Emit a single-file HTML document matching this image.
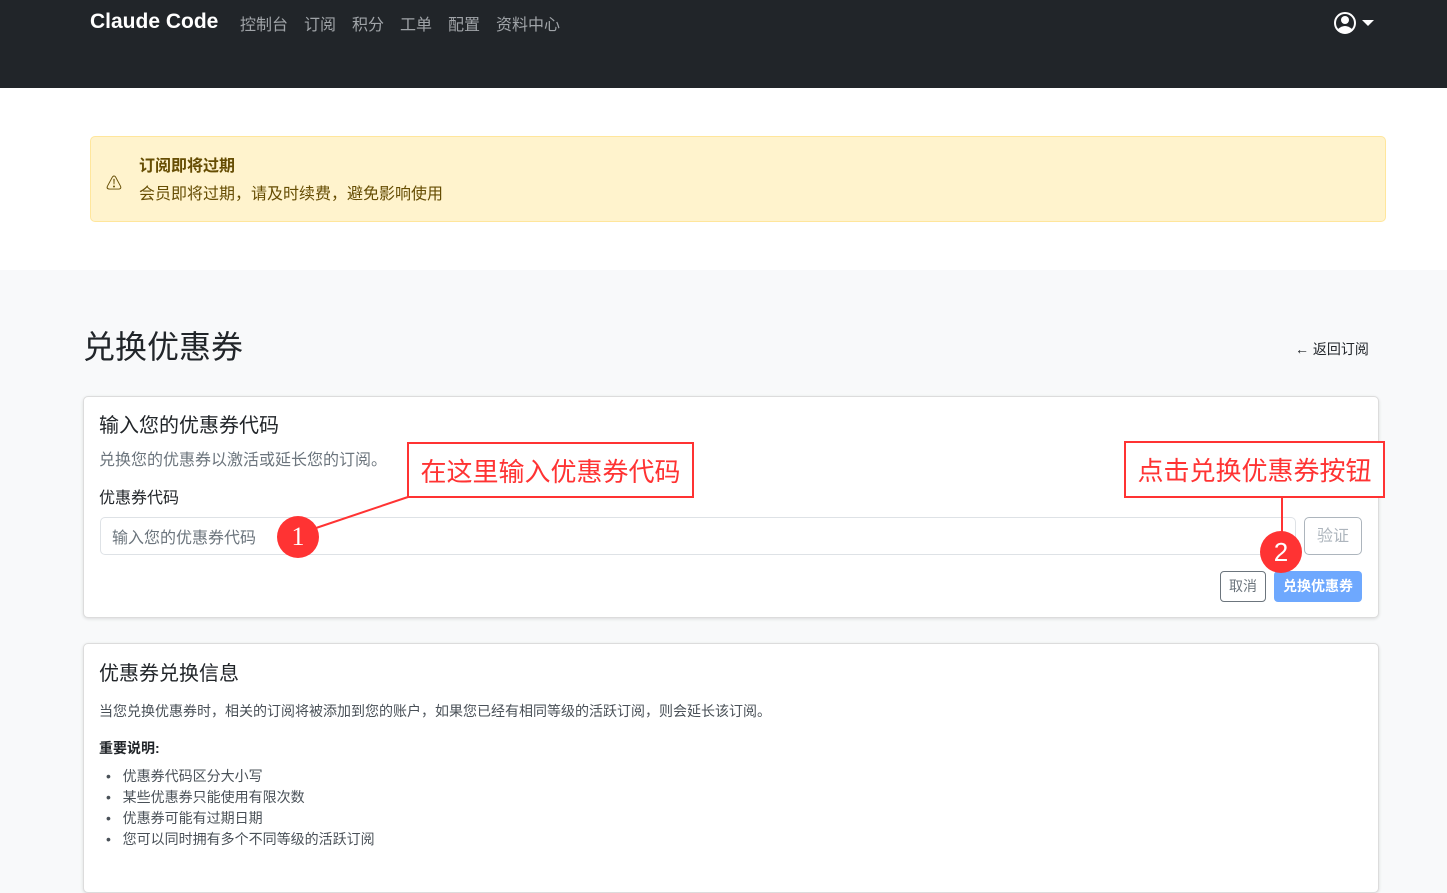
<!DOCTYPE html>
<html><head><meta charset="utf-8"><style>
*{box-sizing:border-box;margin:0;padding:0}
body{width:1447px;height:882px;overflow:hidden;font-family:"Liberation Sans","Noto Sans CJK SC",sans-serif;background:#f8f9fa;position:relative;color:#212529}
.a{position:absolute;white-space:nowrap}
.nav{position:absolute;left:0;top:0;width:1447px;height:88px;background:#212529}
.white{position:absolute;left:0;top:88px;width:1447px;height:182px;background:#fff}
.card{position:absolute;left:83px;width:1296px;background:#fff;border:1px solid #dcdcdc;border-radius:5px;box-shadow:0 1px 3px rgba(0,0,0,.12)}
.box{position:absolute;border:2px solid #f33;background:#fff;color:#f33;font-size:26px;display:flex;align-items:center;justify-content:center}
.circ{position:absolute;width:42px;height:42px;border-radius:50%;background:#f33;color:#fff;font-size:26px;display:flex;align-items:center;justify-content:center;font-family:"Liberation Serif",serif}
.ni{position:absolute;top:11px;font-size:16px;color:#a0a4a8}
</style></head><body>
<div class="nav"></div>
<div class="a" style="left:90px;top:10px;font-size:21px;font-weight:bold;color:#fff">Claude Code</div>
<div class="ni" style="left:240px">控制台</div>
<div class="ni" style="left:304px">订阅</div>
<div class="ni" style="left:352px">积分</div>
<div class="ni" style="left:400px">工单</div>
<div class="ni" style="left:448px">配置</div>
<div class="ni" style="left:496px">资料中心</div>
<svg class="a" style="left:1334px;top:12px" width="42" height="24" viewBox="0 0 42 24"><circle cx="11" cy="11" r="10" fill="none" stroke="#fff" stroke-width="2"/><circle cx="11" cy="8" r="4" fill="#fff"/><path d="M4 17 Q11 11 18 17 L15 20 L7 20Z" fill="#fff"/><path d="M28 8 L40 8 L34 14Z" fill="#fff"/></svg>
<div class="white"></div>
<div class="a" style="left:90px;top:136px;width:1296px;height:86px;background:#fff3cd;border:1px solid #ffe69c;border-radius:5px"></div>
<div class="a" style="left:106px;top:170px;font-size:16px;color:#664d03">⚠</div>
<div class="a" style="left:139px;top:152px;font-size:16px;font-weight:bold;color:#664d03">订阅即将过期</div>
<div class="a" style="left:139px;top:180px;font-size:16px;color:#664d03">会员即将过期，请及时续费，避免影响使用</div>
<div class="a" style="left:83px;top:322px;font-size:32px;color:#212529">兑换优惠券</div>
<div class="a" style="left:1295px;top:339px;font-size:14px;color:#212529">← 返回订阅</div>
<div class="card" style="top:396px;height:222px"></div>
<div class="a" style="left:99px;top:409px;font-size:20px">输入您的优惠券代码</div>
<div class="a" style="left:99px;top:446px;font-size:16px;color:#6c757d">兑换您的优惠券以激活或延长您的订阅。</div>
<div class="a" style="left:99px;top:484px;font-size:16px">优惠券代码</div>
<div class="a" style="left:100px;top:517px;width:1196px;height:38px;border:1px solid #dee2e6;border-radius:5px;background:#fff"></div>
<div class="a" style="left:112px;top:524px;font-size:16px;color:#6c757d">输入您的优惠券代码</div>
<div class="a" style="left:1304px;top:517px;width:58px;height:38px;border:1px solid #adb5bd;border-radius:5px;font-size:16px;color:#adb5bd;text-align:center;line-height:38px">验证</div>
<div class="a" style="left:1220px;top:571px;width:46px;height:31px;border:1px solid #6c757d;border-radius:4px;font-size:14px;color:#6c757d;text-align:center;line-height:29px">取消</div>
<div class="a" style="left:1274px;top:571px;width:88px;height:31px;background:#6ea8fe;border-radius:4px;font-size:14px;color:#fff;text-align:center;line-height:31px;font-weight:bold">兑换优惠券</div>
<div class="card" style="top:643px;height:250px"></div>
<div class="a" style="left:99px;top:657px;font-size:20px">优惠券兑换信息</div>
<div class="a" style="left:99px;top:701px;font-size:14px;color:#495057">当您兑换优惠券时，相关的订阅将被添加到您的账户，如果您已经有相同等级的活跃订阅，则会延长该订阅。</div>
<div class="a" style="left:99px;top:738px;font-size:14px;font-weight:bold">重要说明:</div>
<div class="a" style="left:106px;top:766px;font-size:14px;color:#495057;line-height:21px">•&nbsp;&nbsp;&nbsp;优惠券代码区分大小写<br>•&nbsp;&nbsp;&nbsp;某些优惠券只能使用有限次数<br>•&nbsp;&nbsp;&nbsp;优惠券可能有过期日期<br>•&nbsp;&nbsp;&nbsp;您可以同时拥有多个不同等级的活跃订阅</div>
<svg class="a" style="left:0;top:0" width="1447" height="882"><line x1="316" y1="528" x2="408" y2="497" stroke="#f33" stroke-width="2"/><line x1="1282" y1="497" x2="1282" y2="532" stroke="#f33" stroke-width="2"/></svg>
<div class="box" style="left:407px;top:442px;width:287px;height:56px">在这里输入优惠券代码</div>
<div class="box" style="left:1124px;top:441px;width:261px;height:57px">点击兑换优惠券按钮</div>
<div class="circ" style="left:277px;top:516px">1</div>
<div class="circ" style="left:1260px;top:531px;font-family:'Liberation Sans',sans-serif">2</div>
</body></html>
